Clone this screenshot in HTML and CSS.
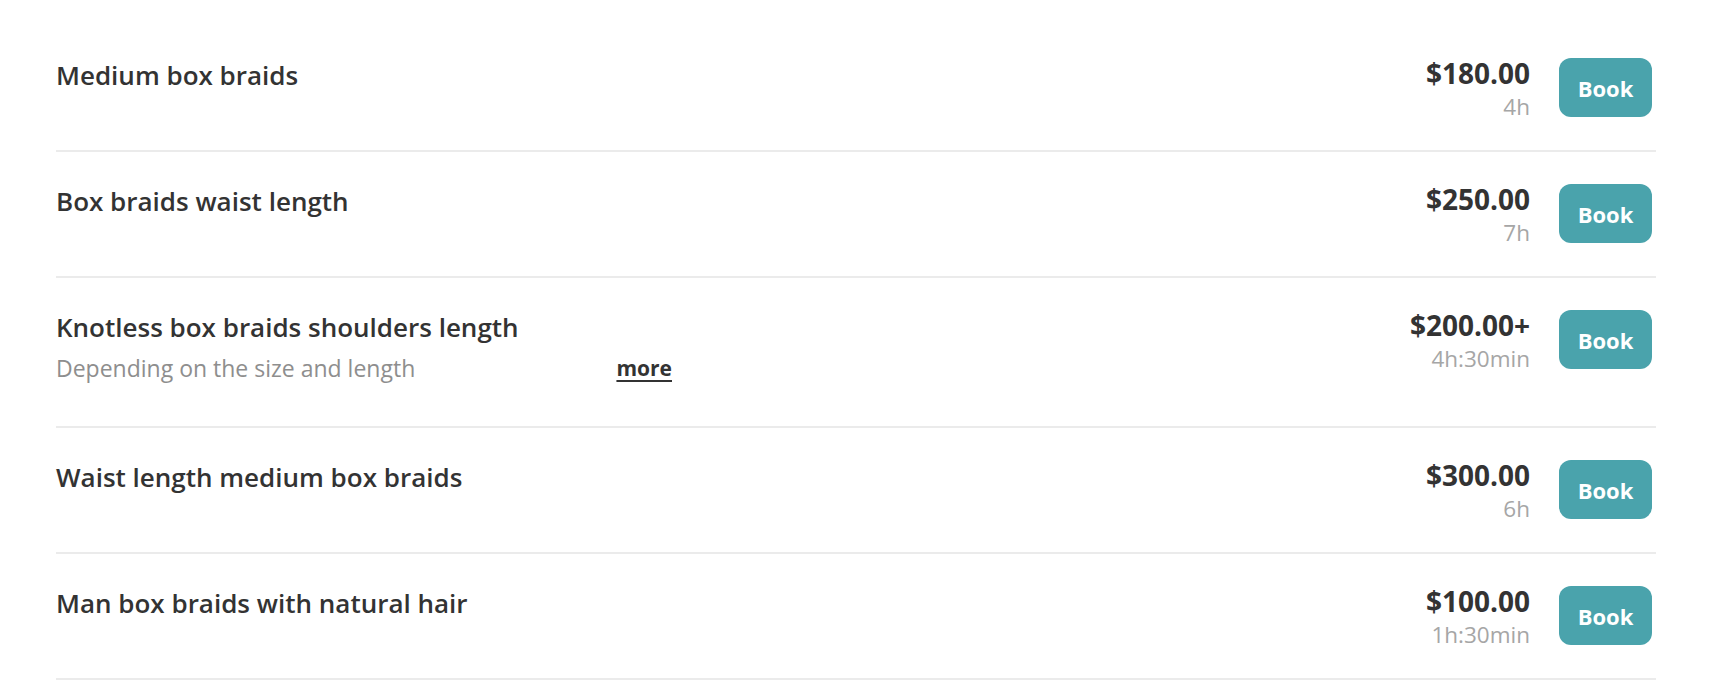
FILE: index.html
```html
<!DOCTYPE html>
<html lang="en">
<head>
<meta charset="utf-8">
<title>Services</title>
<link rel="stylesheet" href="styles.css">
</head>
<body>
<main class="services">
  <div class="service">
    <div class="info">
      <div class="name">Medium box braids</div>
    </div>
    <div class="meta">
      <div class="price">$180.00</div>
      <div class="duration">4h</div>
    </div>
    <button class="book">Book</button>
  </div>
  <div class="service">
    <div class="info">
      <div class="name">Box braids waist length</div>
    </div>
    <div class="meta">
      <div class="price">$250.00</div>
      <div class="duration">7h</div>
    </div>
    <button class="book">Book</button>
  </div>
  <div class="service">
    <div class="info">
      <div class="name">Knotless box braids shoulders length</div>
      <div class="desc"><span class="desc-text">Depending on the size and length</span><a class="more" href="#">more</a></div>
    </div>
    <div class="meta">
      <div class="price">$200.00+</div>
      <div class="duration">4h:30min</div>
    </div>
    <button class="book">Book</button>
  </div>
  <div class="service">
    <div class="info">
      <div class="name">Waist length medium box braids</div>
    </div>
    <div class="meta">
      <div class="price">$300.00</div>
      <div class="duration">6h</div>
    </div>
    <button class="book">Book</button>
  </div>
  <div class="service">
    <div class="info">
      <div class="name">Man box braids with natural hair</div>
    </div>
    <div class="meta">
      <div class="price">$100.00</div>
      <div class="duration">1h:30min</div>
    </div>
    <button class="book">Book</button>
  </div>
</main>
</body>
</html>
```
FILE: styles.css
```css
* { box-sizing: border-box; }
html, body { margin: 0; padding: 0; background: #fff; }
body {
  font-family: "Open Sans", "Liberation Sans", sans-serif;
  color: #333;
}
.services {
  width: 1600px;
  margin-left: 56px;
  padding-top: 26px;
}
.service {
  display: flex;
  align-items: flex-start;
  padding: 32px 4px 28px 0;
  border-bottom: 2px solid #ebebeb;
}
.info {
  flex: 1;
  min-width: 0;
}
.name {
  font-size: 26px;
  font-weight: 600;
  line-height: 34px;
  color: #333;
}
.desc {
  display: flex;
  justify-content: space-between;
  width: 616px;
  margin: 9px 0 15px;
  line-height: 30px;
  font-size: 23px;
}
.desc-text {
  color: #8e8e8e;
}
.more {
  color: #333;
  font-size: 21px;
  font-weight: 700;
  text-decoration: underline;
  text-underline-offset: 4px;
}
.meta {
  text-align: right;
  margin-right: 29px;
}
.price {
  font-size: 28px;
  font-weight: 700;
  line-height: 30px;
  color: #333;
}
.duration {
  margin-top: 4px;
  font-size: 22.5px;
  line-height: 30px;
  color: #a6a6a6;
}
.book {
  width: 93px;
  height: 59px;
  border: 0;
  border-radius: 12px;
  background: #4aa3ac;
  color: #fff;
  font-family: "Open Sans", "Liberation Sans", sans-serif;
  font-size: 22px;
  font-weight: 700;
  padding: 0;
  cursor: pointer;
}
```
